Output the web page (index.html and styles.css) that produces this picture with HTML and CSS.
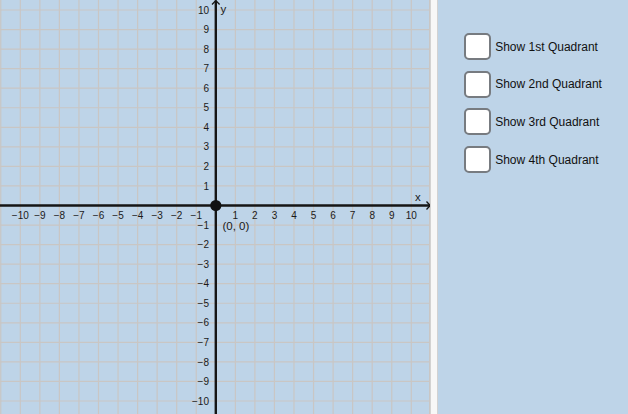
FILE: index.html
```html
<!DOCTYPE html>
<html lang="en">
<head>
<meta charset="utf-8">
<title>Quadrants</title>
<link rel="stylesheet" href="styles.css">
</head>
<body>
<div class="graph">
<svg class="plot" width="430" height="414" viewBox="0 0 430 414" xmlns="http://www.w3.org/2000/svg">
  <g class="grid">
    <line x1="0.75" y1="0" x2="0.75" y2="414"/>
    <line x1="20.3" y1="0" x2="20.3" y2="414"/>
    <line x1="39.85" y1="0" x2="39.85" y2="414"/>
    <line x1="59.4" y1="0" x2="59.4" y2="414"/>
    <line x1="78.95" y1="0" x2="78.95" y2="414"/>
    <line x1="98.5" y1="0" x2="98.5" y2="414"/>
    <line x1="118.05" y1="0" x2="118.05" y2="414"/>
    <line x1="137.6" y1="0" x2="137.6" y2="414"/>
    <line x1="157.15" y1="0" x2="157.15" y2="414"/>
    <line x1="176.7" y1="0" x2="176.7" y2="414"/>
    <line x1="196.25" y1="0" x2="196.25" y2="414"/>
    <line x1="235.35" y1="0" x2="235.35" y2="414"/>
    <line x1="254.9" y1="0" x2="254.9" y2="414"/>
    <line x1="274.45" y1="0" x2="274.45" y2="414"/>
    <line x1="294" y1="0" x2="294" y2="414"/>
    <line x1="313.55" y1="0" x2="313.55" y2="414"/>
    <line x1="333.1" y1="0" x2="333.1" y2="414"/>
    <line x1="352.65" y1="0" x2="352.65" y2="414"/>
    <line x1="372.2" y1="0" x2="372.2" y2="414"/>
    <line x1="391.75" y1="0" x2="391.75" y2="414"/>
    <line x1="411.3" y1="0" x2="411.3" y2="414"/>
    <line x1="429.6" y1="0" x2="429.6" y2="414"/>
    <line x1="0" y1="10" x2="430" y2="10"/>
    <line x1="0" y1="29.55" x2="430" y2="29.55"/>
    <line x1="0" y1="49.1" x2="430" y2="49.1"/>
    <line x1="0" y1="68.65" x2="430" y2="68.65"/>
    <line x1="0" y1="88.2" x2="430" y2="88.2"/>
    <line x1="0" y1="107.75" x2="430" y2="107.75"/>
    <line x1="0" y1="127.3" x2="430" y2="127.3"/>
    <line x1="0" y1="146.85" x2="430" y2="146.85"/>
    <line x1="0" y1="166.4" x2="430" y2="166.4"/>
    <line x1="0" y1="185.95" x2="430" y2="185.95"/>
    <line x1="0" y1="225.05" x2="430" y2="225.05"/>
    <line x1="0" y1="244.6" x2="430" y2="244.6"/>
    <line x1="0" y1="264.15" x2="430" y2="264.15"/>
    <line x1="0" y1="283.7" x2="430" y2="283.7"/>
    <line x1="0" y1="303.25" x2="430" y2="303.25"/>
    <line x1="0" y1="322.8" x2="430" y2="322.8"/>
    <line x1="0" y1="342.35" x2="430" y2="342.35"/>
    <line x1="0" y1="361.9" x2="430" y2="361.9"/>
    <line x1="0" y1="381.45" x2="430" y2="381.45"/>
    <line x1="0" y1="401" x2="430" y2="401"/>
  </g>
  <g class="axes">
    <line x1="0" y1="205.5" x2="430" y2="205.5"/>
    <line x1="215.8" y1="0.5" x2="215.8" y2="414"/>
    <polyline class="arrow" points="426.5,201.5 430.2,205.5 426.5,209.5"/>
    <polyline class="arrow" points="212,4.5 215.8,0.6 219.6,4.5"/>
  </g>
  <g class="xticks">
    <text x="20.3" y="218.5">−10</text>
    <text x="39.85" y="218.5">−9</text>
    <text x="59.4" y="218.5">−8</text>
    <text x="78.95" y="218.5">−7</text>
    <text x="98.5" y="218.5">−6</text>
    <text x="118.05" y="218.5">−5</text>
    <text x="137.6" y="218.5">−4</text>
    <text x="157.15" y="218.5">−3</text>
    <text x="176.7" y="218.5">−2</text>
    <text x="196.25" y="218.5">−1</text>
    <text x="235.35" y="218.5">1</text>
    <text x="254.9" y="218.5">2</text>
    <text x="274.45" y="218.5">3</text>
    <text x="294" y="218.5">4</text>
    <text x="313.55" y="218.5">5</text>
    <text x="333.1" y="218.5">6</text>
    <text x="352.65" y="218.5">7</text>
    <text x="372.2" y="218.5">8</text>
    <text x="391.75" y="218.5">9</text>
    <text x="411.3" y="218.5">10</text>
  </g>
  <g class="yticks">
    <text x="209" y="13.6">10</text>
    <text x="209" y="33.1">9</text>
    <text x="209" y="52.7">8</text>
    <text x="209" y="72.2">7</text>
    <text x="209" y="91.8">6</text>
    <text x="209" y="111.3">5</text>
    <text x="209" y="130.9">4</text>
    <text x="209" y="150.4">3</text>
    <text x="209" y="170">2</text>
    <text x="209" y="189.5">1</text>
    <text x="209" y="228.6">−1</text>
    <text x="209" y="248.2">−2</text>
    <text x="209" y="267.7">−3</text>
    <text x="209" y="287.3">−4</text>
    <text x="209" y="306.8">−5</text>
    <text x="209" y="326.4">−6</text>
    <text x="209" y="345.9">−7</text>
    <text x="209" y="365.5">−8</text>
    <text x="209" y="385">−9</text>
    <text x="209" y="404.6">−10</text>
  </g>
  <text class="axis-name" x="415" y="200.5">x</text>
  <text class="axis-name" x="220.5" y="12.5">y</text>
  <circle class="origin" cx="215.8" cy="205.5" r="5.6"/>
  <text class="origin-label" x="222.5" y="230">(0, 0)</text>
</svg>
</div>
<div class="sep"></div>
<div class="panel">
  <div class="row"><span class="box"></span><span class="label">Show 1st Quadrant</span></div>
  <div class="row"><span class="box"></span><span class="label">Show 2nd Quadrant</span></div>
  <div class="row"><span class="box"></span><span class="label">Show 3rd Quadrant</span></div>
  <div class="row"><span class="box"></span><span class="label">Show 4th Quadrant</span></div>
</div>
</body>
</html>
```
FILE: styles.css
```css
html, body {
  margin: 0;
  padding: 0;
}
body {
  width: 628px;
  height: 414px;
  overflow: hidden;
  display: flex;
  background: #bed4e8;
  font-family: "Liberation Sans", Arial, sans-serif;
}
.graph {
  width: 430px;
  height: 414px;
  flex: none;
  background: #bed4e8;
}
.plot {
  display: block;
}
.grid line {
  stroke: #c9c6c4;
  stroke-width: 1.2;
}
.axes line {
  stroke: #151515;
  stroke-width: 2.4;
}
.axes .arrow {
  fill: none;
  stroke: #151515;
  stroke-width: 1.3;
}
.xticks text,
.yticks text {
  font-family: "Liberation Sans", Arial, sans-serif;
  font-size: 10px;
  fill: #1a1a1a;
}
.xticks text {
  text-anchor: middle;
}
.yticks text {
  text-anchor: end;
}
.axis-name {
  font-family: "Liberation Sans", Arial, sans-serif;
  font-size: 11.5px;
  fill: #1a1a1a;
}
.origin {
  fill: #111;
}
.origin-label {
  font-family: "Liberation Sans", Arial, sans-serif;
  font-size: 11.5px;
  fill: #1a1a1a;
}
.sep {
  width: 6px;
  height: 414px;
  flex: none;
  background: #f7f7f7;
  border-left: 1px solid #d2d2d2;
  border-right: 1px solid #d2d2d2;
}
.panel {
  flex: 1;
  height: 414px;
  background: #bed4e8;
  box-sizing: border-box;
  padding: 33px 0 0 26px;
  display: flex;
  flex-direction: column;
  gap: 10.7px;
}
.row {
  display: flex;
  align-items: center;
  gap: 4.2px;
  height: 27px;
}
.box {
  width: 27px;
  height: 27px;
  box-sizing: border-box;
  border: 2px solid #777b80;
  border-radius: 5px;
  background: #fff;
  flex: none;
}
.label {
  font-size: 12px;
  color: #111;
  white-space: nowrap;
}
```
